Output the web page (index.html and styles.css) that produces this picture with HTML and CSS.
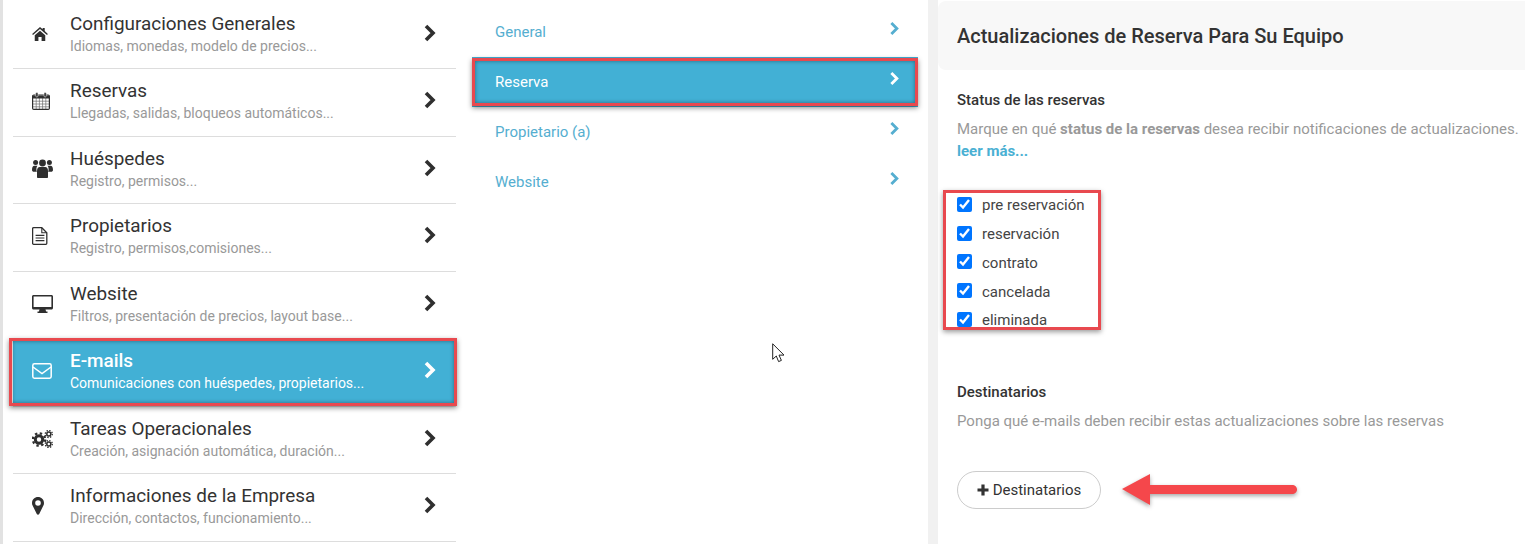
FILE: index.html
```html
<!DOCTYPE html>
<html lang="es">
<head>
<meta charset="utf-8">
<title>Configuraciones</title>
<link rel="stylesheet" href="styles.css">
</head>
<body>
<svg class="defs" width="0" height="0" aria-hidden="true">
  <symbol id="chev" viewBox="0 0 14 18"><path d="M3 2l7 7-7 7" fill="none" stroke="currentColor" stroke-width="3.6"/></symbol>
</svg>
<div class="page">
  <nav class="sidebar">
    <a class="row">
      <span class="ico"><svg viewBox="0 0 18 16" width="16" height="14"><path fill="currentColor" d="M9 0l3 2.6V1h2.400v3.700L18 8l-1 1.100L9 2.200 1 9.100 0 8zM3 9.500l6-5.100 6 5.100V16h-4.200v-4.500H7.200V16H3z"/></svg></span>
      <span class="txt"><b>Configuraciones Generales</b><small>Idiomas, monedas, modelo de precios...</small></span>
      <svg class="chev"><use href="#chev"/></svg>
    </a>
    <a class="row">
      <span class="ico"><svg viewBox="0 0 18 18" width="18" height="18"><rect x=".6" y="3" width="16.800" height="14.400" rx="1.200" fill="#fff" stroke="currentColor" stroke-width="1.200"/><path d="M1 6.500h16V3.500H1z" fill="currentColor"/><path d="M1 9.200h16M1 12h16M1 14.800h16M4.200 6v11M7.400 6v11M10.600 6v11M13.800 6v11" stroke="currentColor" stroke-width=".7" opacity=".7"/><rect x="3.700" y=".5" width="2.300" height="4.500" rx="1.100" fill="currentColor" stroke="#fff" stroke-width=".5"/><rect x="12" y=".5" width="2.300" height="4.500" rx="1.100" fill="currentColor" stroke="#fff" stroke-width=".5"/></svg></span>
      <span class="txt"><b>Reservas</b><small>Llegadas, salidas, bloqueos automáticos...</small></span>
      <svg class="chev"><use href="#chev"/></svg>
    </a>
    <a class="row">
      <span class="ico"><svg viewBox="0 0 21 19" width="21" height="19"><g fill="currentColor"><circle cx="3.600" cy="3.600" r="2.500"/><circle cx="17.400" cy="3.600" r="2.500"/><circle cx="10.500" cy="4" r="3.400"/><path d="M0 11c0-3 1-4.200 2.400-4.200h3c-.6 1-1 2-1 3.800 0 1 .2 1.600.5 2.200H2c-1.200 0-2-.6-2-1.800zM21 11c0-3-1-4.200-2.400-4.200h-3c.6 1 1 2 1 3.800 0 1-.2 1.600-.5 2.200H19c1.200 0 2-.6 2-1.800z"/><path d="M5 18.200V12c0-2.600 1-3.900 2.800-3.900h5.400C15 8.100 16 9.400 16 12v6.200c0 .5-.5.8-1 .8H6c-.5 0-1-.3-1-.8z"/></g></svg></span>
      <span class="txt"><b>Huéspedes</b><small>Registro, permisos...</small></span>
      <svg class="chev"><use href="#chev"/></svg>
    </a>
    <a class="row">
      <span class="ico"><svg viewBox="0 0 16 18" width="16" height="18"><path d="M1.600.7h8.200l5 5v10.600c0 .6-.4 1-1 1H1.600c-.6 0-1-.4-1-1V1.700c0-.6.4-1 1-1z" fill="none" stroke="currentColor" stroke-width="1.300"/><path d="M9.800 1v4.800h4.800M3.600 8.400h8.800M3.600 11h8.800M3.600 13.600h8.800" fill="none" stroke="currentColor" stroke-width="1.100"/></svg></span>
      <span class="txt"><b>Propietarios</b><small>Registro, permisos,comisiones...</small></span>
      <svg class="chev"><use href="#chev"/></svg>
    </a>
    <a class="row">
      <span class="ico"><svg viewBox="0 0 21 18" width="21" height="18"><path fill="currentColor" fill-rule="evenodd" d="M1.500 0h18C20.300 0 21 .7 21 1.500v11.500c0 .8-.7 1.500-1.500 1.500h-6l.6 2h1.400v1.500H5.500V16.500h1.400l.6-2h-6C.7 14.500 0 13.800 0 13V1.500C0 .7.700 0 1.500 0zM1.600 1.600v10.400h17.800V1.600z"/></svg></span>
      <span class="txt"><b>Website</b><small>Filtros, presentación de precios, layout base...</small></span>
      <svg class="chev"><use href="#chev"/></svg>
    </a>
    <a class="row active">
      <span class="ico"><svg viewBox="0 0 20 16" width="20" height="16"><rect x=".8" y=".8" width="18.400" height="14.400" rx="1.600" fill="none" stroke="currentColor" stroke-width="1.500"/><path d="M1 4l9 6.500L19 4" fill="none" stroke="currentColor" stroke-width="1.500"/></svg></span>
      <span class="txt"><b>E-mails</b><small>Comunicaciones con huéspedes, propietarios...</small></span>
      <svg class="chev"><use href="#chev"/></svg>
    </a>
    <a class="row">
      <span class="ico"><svg viewBox="0 0 21 18" width="21" height="18"><g fill="none" stroke="currentColor"><circle cx="7" cy="9.500" r="3.700" stroke-width="3"/><circle cx="7" cy="9.500" r="6.200" stroke-width="2.200" stroke-dasharray="2.400 2.470"/><circle cx="16.800" cy="4" r="2" stroke-width="1.500"/><circle cx="16.800" cy="4" r="3.500" stroke-width="1.300" stroke-dasharray="1.400 1.350"/><circle cx="16.800" cy="14" r="2" stroke-width="1.500"/><circle cx="16.800" cy="14" r="3.500" stroke-width="1.300" stroke-dasharray="1.400 1.350"/></g></svg></span>
      <span class="txt"><b>Tareas Operacionales</b><small>Creación, asignación automática, duración...</small></span>
      <svg class="chev"><use href="#chev"/></svg>
    </a>
    <a class="row">
      <span class="ico"><svg viewBox="0 0 12 18" width="12" height="18"><path fill="currentColor" fill-rule="evenodd" d="M6 0c3.300 0 6 2.600 6 5.900 0 1-.2 1.800-.6 2.600L7.200 17c-.5 1-1.900 1-2.400 0L.6 8.500C.2 7.700 0 6.900 0 5.900 0 2.600 2.700 0 6 0zm0 3.200a2.800 2.800 0 1 0 0 5.600 2.800 2.800 0 0 0 0-5.600z"/></svg></span>
      <span class="txt"><b>Informaciones de la Empresa</b><small>Dirección, contactos, funcionamiento...</small></span>
      <svg class="chev"><use href="#chev"/></svg>
    </a>
  </nav>

  <nav class="submenu">
    <a class="sub">General<svg class="subchev"><use href="#chev"/></svg></a>
    <a class="sub active">Reserva<svg class="subchev"><use href="#chev"/></svg></a>
    <a class="sub">Propietario (a)<svg class="subchev"><use href="#chev"/></svg></a>
    <a class="sub">Website<svg class="subchev"><use href="#chev"/></svg></a>
  </nav>

  <main class="panel">
    <header class="panel-head"><h1>Actualizaciones de Reserva Para Su Equipo</h1></header>
    <section class="panel-body">
      <h2>Status de las reservas</h2>
      <p class="help">Marque en qué <strong>status de la reservas</strong> desea recibir notificaciones de actualizaciones.<br><a class="more">leer más...</a></p>
      <ul class="checks">
        <li><label><input type="checkbox" checked>pre reservación</label></li>
        <li><label><input type="checkbox" checked>reservación</label></li>
        <li><label><input type="checkbox" checked>contrato</label></li>
        <li><label><input type="checkbox" checked>cancelada</label></li>
        <li><label><input type="checkbox" checked>eliminada</label></li>
      </ul>
      <h2 class="dest">Destinatarios</h2>
      <p class="help">Ponga qué e-mails deben recibir estas actualizaciones sobre las reservas</p>
      <button class="add" type="button"><svg viewBox="0 0 12 12" width="12" height="12"><path d="M6 .5v11M.5 6h11" stroke="currentColor" stroke-width="3.200" fill="none"/></svg>Destinatarios</button>
    </section>
  </main>
</div>

<div class="mark mark-email"></div>
<div class="mark mark-sub"></div>
<div class="mark mark-checks"></div>
<svg class="arrow" viewBox="0 0 180 36" width="180" height="36"><path fill="#f5474b" d="M1 16L29 1v11h142c3 0 5 2 5 4.500s-2 4.500-5 4.500H29v11z"/></svg>
<svg class="cursor" viewBox="0 0 13 20" width="13" height="20"><path d="M.7.8v15.500l3.600-3.300 2.300 5.600 2.800-1.200-2.400-5.300h5z" fill="#fff" stroke="#222" stroke-width="1"/></svg>
</body>
</html>
```

FILE: styles.css
```css
* { box-sizing: border-box; }
html, body { margin: 0; height: 544px; overflow: hidden; background: #fff; }
body { font-family: Roboto, "Liberation Sans", sans-serif; color: #333; position: relative; }
.defs { position: absolute; }
.page { display: flex; height: 544px; }

.sidebar { width: 456px; flex: none; border-left: 3px solid #e2e2e2; padding: 1.5px 0 0 10px; }
.row { display: flex; align-items: center; height: 67.5px; border-bottom: 1px solid #ddd; color: #2f2f2f; padding-bottom: 2px; }
.ico { width: 57px; flex: none; padding-left: 19px; display: flex; align-items: center; }
.txt { flex: 1; display: flex; flex-direction: column; padding-top: 2px; }
.txt b { font-weight: 400; font-size: 18.9px; line-height: 22px; color: #333; }
.txt small { font-size: 14px; line-height: 22px; color: #999; }
.chev { width: 14px; height: 18px; margin: 0 19px 2px 0; color: #2f2f2f; }
.row.active { background: #42b0d5; color: #fff; }
.row.active .txt b { color: #fff; font-weight: 500; }
.row.active .txt small { color: #fff; }
.row.active .chev { color: #fff; }

.submenu { width: 446px; flex: none; margin-left: 16px; padding-top: 7px; }
.sub { display: flex; align-items: center; justify-content: space-between; height: 50px; padding: 0 18px 0 23px; color: #55aed0; font-size: 15px; }
.sub.active { background: #42b0d5; color: #fff; }
.subchev { width: 11px; height: 15px; margin-top: -8px; }

.panel { flex: 1; margin-left: 10px; border-left: 10px solid #f1f1f1; min-width: 0; }
.panel-head { height: 69px; margin-top: 1px; background: #f8f8f8; border-radius: 8px 0 0 8px; padding: 0 19px; display: flex; align-items: center; }
.panel-head h1 { margin: 0; font-size: 20px; font-weight: 500; color: #333; }
.panel-body { padding: 22px 0 0 19px; }
.panel-body h2 { margin: 0; font-size: 15px; font-weight: 500; line-height: 17px; color: #333; }
.help { margin: 9px 0 0; font-size: 15px; line-height: 22px; color: #999; white-space: nowrap; }
.help strong { font-weight: 700; color: #999; }
.more { color: #4ab0d3; font-weight: 700; }
.checks { list-style: none; margin: 29px 0 0; padding: 0; }
.checks li { height: 28.75px; display: flex; align-items: center; font-size: 15px; color: #444; }
.checks label { display: flex; align-items: center; }
.checks input { width: 15px; height: 15px; margin: -1px 10px 1px 0; }
.dest { margin-top: 49px !important; }
.add { display: flex; align-items: center; gap: 4px; margin-top: 39px; height: 38px; width: 144px; justify-content: center; background: #fff; border: 1px solid #ccc; border-radius: 19px; font: 400 15px Roboto, "Liberation Sans", sans-serif; color: #333; padding: 0; }

.mark { position: absolute; border: 3px solid #e8494f; box-shadow: 0 2px 5px rgba(0,0,0,.45), inset 0 0 4px rgba(0,0,0,.4); }
.mark-email { left: 9px; top: 338px; width: 448px; height: 68px; }
.mark-sub { left: 472px; top: 58px; width: 446px; height: 48px; }
.mark-checks { left: 943px; top: 190px; width: 158px; height: 140px; box-shadow: 0 2px 5px rgba(0,0,0,.4); }
.arrow { position: absolute; left: 1121px; top: 473px; filter: drop-shadow(0 2px 2px rgba(0,0,0,.35)); }
.cursor { position: absolute; left: 772px; top: 343px; }
```
